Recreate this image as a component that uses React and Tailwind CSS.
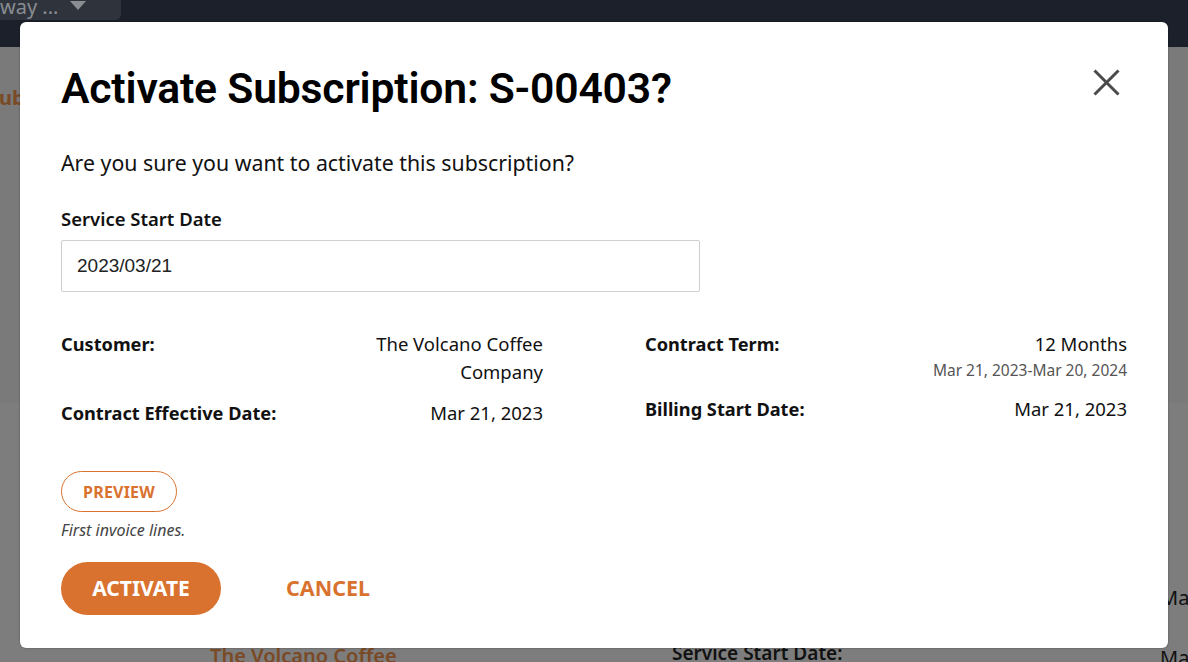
import React from 'react';

const DetailRow = ({ label, value, sub }) => (
    <div className="flex justify-between items-start">
        <span className="font-bold text-[18.2px] leading-[28px] text-[#111]">{label}</span>
        <div className="text-right">
            <div className="text-[18.5px] leading-[28px] text-[#111] w-[180px] ml-auto">{value}</div>
            {sub && <div className="text-[15.5px] leading-[24px] text-[#555]">{sub}</div>}
        </div>
    </div>
);

const App = () => {
    return (
        <div className="relative w-[1188px] h-[662px] overflow-hidden bg-[#7b7b7b]" style={{ fontFamily: '"Noto Sans", sans-serif' }}>
            {/* Page behind the overlay */}
            <div className="h-[47px] bg-[#1b202a]">
                <div className="w-[121px] h-[20px] bg-[#2e333c] rounded-br-[6px] flex items-center text-[#8a8d92] text-[20px] leading-[20px] overflow-hidden">
                    <span className="-mt-[6px]">way ...</span>
                    <span className="ml-[12px] -mt-[10px] w-0 h-0 border-l-[8px] border-r-[8px] border-t-[9px] border-l-transparent border-r-transparent border-t-[#8a8d92]"></span>
                </div>
            </div>
            <div className="h-[356px] bg-[#7a7a7a] pt-[36px] overflow-hidden">
                <span className="block font-bold text-[20px] text-[#7a4a26] -ml-[12px]">Sub</span>
            </div>
            <div className="h-[259px] bg-[#7d7d7d] relative">
                <span className="absolute left-[1160px] top-[180px] text-[20px] text-[#111]">Ma</span>
                <span className="absolute left-[1160px] top-[240px] text-[20px] text-[#111]">Ma</span>
                <span className="absolute left-[210px] top-[238px] text-[20px] font-semibold text-[#7a4a26]">The Volcano Coffee</span>
                <span className="absolute left-[672px] top-[236px] text-[19px] font-semibold text-[#111]">Service Start Date:</span>
            </div>

            {/* Modal */}
            <div className="absolute left-[20px] top-[22px] w-[1148px] h-[626px] bg-white rounded-[6px] shadow-[0_0_2px_rgba(0,0,0,0.4)] pl-[41px] pr-[41px]">
                <div className="flex justify-between items-start pt-[41px]">
                    <h2 className="text-[42.7px] leading-[50px] font-semibold text-black tracking-[-0.2px]" style={{ fontFamily: 'Roboto, sans-serif' }}>
                        Activate Subscription: S-00403?
                    </h2>
                    <button className="mt-[6px] mr-[7px] text-[#4a4a4a]">
                        <svg width="27" height="27" viewBox="0 0 27 27" fill="none" stroke="currentColor" strokeWidth="3">
                            <path d="M1.5 1.5 L25.5 25.5 M25.5 1.5 L1.5 25.5" />
                        </svg>
                    </button>
                </div>

                <p className="mt-[36px] text-[21.3px] leading-[28px] text-[#111]">Are you sure you want to activate this subscription?</p>

                <label className="block mt-[30px] text-[18.5px] leading-[24px] font-semibold text-[#111]">Service Start Date</label>
                <div className="mt-[9px] w-[639px] h-[52px] border border-[#cfcfcf] rounded-[2px] flex items-center pl-[15px] text-[19px] text-[#222]" style={{ fontFamily: '"Liberation Sans", Arial, sans-serif' }}>
                    2023/03/21
                </div>

                <div className="grid grid-cols-2 gap-x-[102px] mt-[38px] w-[1066px]">
                    <div className="flex flex-col gap-[13px]">
                        <DetailRow label="Customer:" value="The Volcano Coffee Company" />
                        <DetailRow label="Contract Effective Date:" value="Mar 21, 2023" />
                    </div>
                    <div className="flex flex-col gap-[13px]">
                        <DetailRow label="Contract Term:" value="12 Months" sub="Mar 21, 2023-Mar 20, 2024" />
                        <DetailRow label="Billing Start Date:" value="Mar 21, 2023" />
                    </div>
                </div>

                <button className="mt-[44px] w-[116px] h-[41px] rounded-full border border-[#d9722f] text-[#d9722f] font-bold text-[16px] tracking-[0.2px]">
                    PREVIEW
                </button>
                <p className="mt-[8px] italic text-[16px] leading-[20px] text-[#444]">First invoice lines.</p>

                <div className="flex items-center mt-[22px]">
                    <button className="w-[160px] h-[53px] rounded-full bg-[#d9722f] text-white font-bold text-[21px]">
                        ACTIVATE
                    </button>
                    <button className="ml-[65px] text-[#d9722f] font-bold text-[21.5px]">CANCEL</button>
                </div>
            </div>
        </div>
    );
};

export default App;
